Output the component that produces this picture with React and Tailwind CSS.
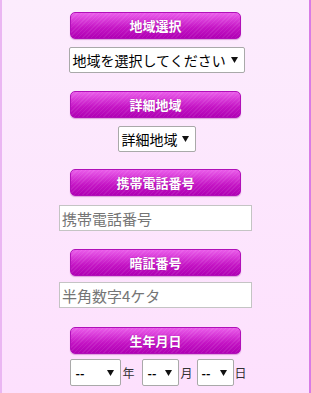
import React from 'react';

const font = "font-['Noto_Sans_CJK_JP','Noto_Sans',sans-serif]";

const Label = ({ children }) => (
  <div className="mx-auto w-[171px] h-[27px] rounded-[5px] border border-[#b010b8] bg-[image:repeating-linear-gradient(-45deg,rgba(255,255,255,0.08)_0px,rgba(255,255,255,0.08)_1px,transparent_1px,transparent_3px),linear-gradient(#ea5cea,#c414c4_60%,#b000b4)] flex items-center justify-center shadow-[0_1px_1px_rgba(150,0,150,0.3)]">
    <span className="text-white text-[13px] font-bold leading-none [text-shadow:0_0_1px_rgba(120,0,120,0.6)]">{children}</span>
  </div>
);

const Arrow = () => (
  <svg width="7" height="6" viewBox="0 0 7 6" className="shrink-0">
    <path d="M0 0H7L3.5 6Z" fill="#111" />
  </svg>
);

const Select = ({ text, className }) => (
  <div className={`flex items-center justify-between whitespace-nowrap bg-white border border-[#a9a9a9] rounded-[2px] text-black ${className}`}>
    <span className="leading-none">{text}</span>
    <Arrow />
  </div>
);

const Field = ({ placeholder }) => (
  <div className="mx-auto w-[193px] h-[26px] bg-white border border-[#c4c4c4] flex items-center pl-[2px]">
    <span className="text-[15px] text-[#757575] leading-none whitespace-nowrap">{placeholder}</span>
  </div>
);

export default function App() {
  return (
    <div className={`w-[311px] h-[393px] overflow-hidden bg-gradient-to-b from-[#fcecfd] to-[#fde0fd] border-l-[2px] border-l-[#eab6f2] border-r-[2px] border-r-[#d77ce6] ${font}`}>
      <div className="pt-[12px] flex flex-col">
        <Label>地域選択</Label>
        <div className="flex justify-center mt-[8px] pl-[2px]">
          <Select text="地域を選択してください" className="w-[176px] h-[26px] pl-[3px] pr-[6px] text-[14px]" />
        </div>

        <div className="mt-[18px]"><Label>詳細地域</Label></div>
        <div className="flex justify-center mt-[8px] pl-[2px]">
          <Select text="詳細地域" className="w-[78px] h-[26px] pl-[3px] pr-[6px] text-[14px]" />
        </div>

        <div className="mt-[17px]"><Label>携帯電話番号</Label></div>
        <div className="mt-[9px]"><Field placeholder="携帯電話番号" /></div>

        <div className="mt-[18px]"><Label>暗証番号</Label></div>
        <div className="mt-[6px]"><Field placeholder="半角数字4ケタ" /></div>

        <div className="mt-[19px]"><Label>生年月日</Label></div>
        <div className="flex items-center justify-center mt-[5px] text-[12px] text-[#333] pl-[6px]">
          <Select text="--" className="w-[51px] h-[27px] pl-[4px] pr-[6px] text-[12px] font-bold" />
          <span className="ml-[1px] mr-[8px]">年</span>
          <Select text="--" className="w-[37px] h-[27px] pl-[4px] pr-[6px] text-[12px] font-bold" />
          <span className="ml-[1px] mr-[4px]">月</span>
          <Select text="--" className="w-[37px] h-[27px] pl-[4px] pr-[6px] text-[12px] font-bold" />
          <span className="ml-[1px]">日</span>
        </div>
      </div>
    </div>
  );
}
